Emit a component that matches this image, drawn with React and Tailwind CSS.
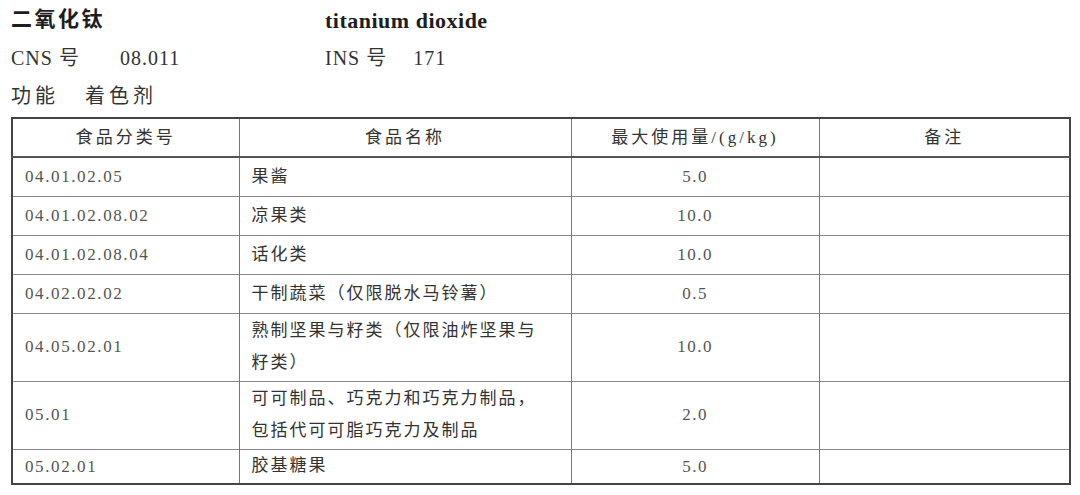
// App.jsx
// 食品添加剂使用标准 — 二氧化钛 entry, reproduced as a bordered table.

const FONT = {
  fontFamily: '"Liberation Serif", "Noto Sans CJK SC", serif',
};

const ROWS = [
  { code: "04.01.02.05", name: ["果酱"], max: "5.0", h: "h-[39px]" },
  { code: "04.01.02.08.02", name: ["凉果类"], max: "10.0", h: "h-[39px]" },
  { code: "04.01.02.08.04", name: ["话化类"], max: "10.0", h: "h-[39px]" },
  { code: "04.02.02.02", name: ["干制蔬菜（仅限脱水马铃薯）"], max: "0.5", h: "h-[39px]" },
  {
    code: "04.05.02.01",
    name: ["熟制坚果与籽类（仅限油炸坚果与", "籽类）"],
    max: "10.0",
    h: "h-[68px]",
  },
  {
    code: "05.01",
    name: ["可可制品、巧克力和巧克力制品，", "包括代可可脂巧克力及制品"],
    max: "2.0",
    h: "h-[68px]",
  },
  { code: "05.02.01", name: ["胶基糖果"], max: "5.0", h: "h-[35px]" },
];

function InfoLine({ children }) {
  return <div className="flex h-[38px] items-center">{children}</div>;
}

export default function App() {
  return (
    <div className="min-h-screen bg-white pl-[11px] pt-[1px] text-[#2b2b2b]" style={FONT}>
      {/* heading block */}
      <InfoLine>
        <span className="w-[314px] text-[21px] font-bold tracking-[2.5px] text-[#1e1e1e]">
          二氧化钛
        </span>
        <span className="text-[22px] font-bold tracking-[0.5px] text-[#1e1e1e]">
          titanium dioxide
        </span>
      </InfoLine>
      <InfoLine>
        <span className="flex w-[314px] text-[20px] tracking-[1px] text-[#333]">
          <span>CNS 号</span>
          <span className="ml-[40px]">08.011</span>
        </span>
        <span className="flex text-[20px] tracking-[1px] text-[#333]">
          <span>INS 号</span>
          <span className="ml-[26px]">171</span>
        </span>
      </InfoLine>
      <InfoLine>
        <span className="text-[20px] tracking-[4px] text-[#333]">功能</span>
        <span className="ml-[26px] text-[20px] tracking-[4px] text-[#333]">着色剂</span>
      </InfoLine>

      {/* usage table */}
      <table className="mt-[2px] w-[1058px] table-fixed border-collapse border-2 border-[#444]">
        <colgroup>
          <col className="w-[227px]" />
          <col className="w-[332px]" />
          <col className="w-[248px]" />
          <col className="w-[251px]" />
        </colgroup>
        <thead>
          <tr className="h-[39px] border-b-2 border-[#555] text-[17px] text-[#333]">
            <th className="border-r border-[#777] font-normal tracking-[3px]">食品分类号</th>
            <th className="border-r border-[#777] font-normal tracking-[3px]">食品名称</th>
            <th className="border-r border-[#777] font-normal tracking-[3px]">最大使用量/(g/kg)</th>
            <th className="font-normal tracking-[3px]">备注</th>
          </tr>
        </thead>
        <tbody>
          {ROWS.map((r) => (
            <tr key={r.code} className={`${r.h} border-b border-[#888]`}>
              <td className="border-r border-[#777] pl-[12px] text-[17px] tracking-[1.6px] text-[#555]">
                {r.code}
              </td>
              <td className="border-r border-[#777] pl-[12px] text-[17px] leading-[32px] tracking-[2px] text-[#333]">
                {r.name.map((line) => (
                  <div key={line}>{line}</div>
                ))}
              </td>
              <td className="border-r border-[#777] text-center text-[17px] tracking-[1.5px] text-[#555]">
                {r.max}
              </td>
              <td />
            </tr>
          ))}
        </tbody>
      </table>
    </div>
  );
}
